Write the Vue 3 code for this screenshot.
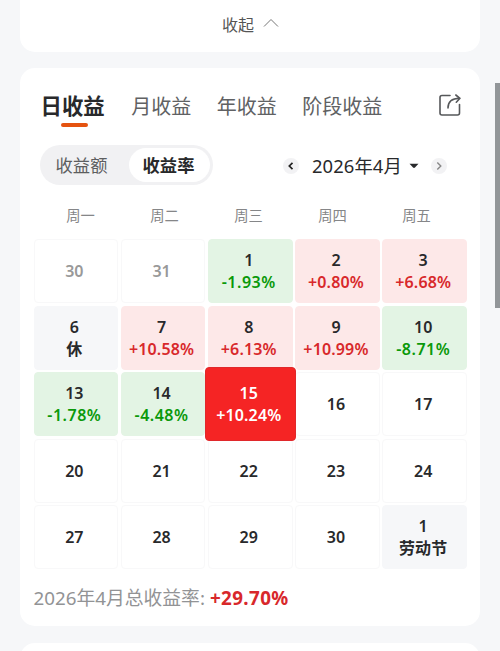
<template>
    <div class="page">
        <section class="card collapse">
            <span>收起</span>
            <svg class="arrow-up" viewBox="0 0 16 10">
                <path d="M1 8.5 8 1.5 15 8.5" />
            </svg>
        </section>

        <section class="card profit">
            <nav class="tabs">
                <div
                    v-for="(tab, index) in tabs"
                    :key="tab"
                    class="tab"
                    :class="{ active: index === activeTab }"
                    @click="activeTab = index"
                >
                    {{ tab }}
                </div>
                <svg class="share" viewBox="0 0 24 24">
                    <path d="M12 2.500H4Q2 2.500 2 4.500V20Q2 22 4 22H19.500Q21.500 22 21.500 20V11.500" />
                    <path d="M10 15C10 9.500 13 5.500 21.500 5.300M17.800 2 22 5.300 18.300 9.200" />
                </svg>
            </nav>

            <div class="toolbar">
                <div class="switch">
                    <div class="option" :class="{ on: mode === 'amount' }" @click="mode = 'amount'">收益额</div>
                    <div class="option" :class="{ on: mode === 'rate' }" @click="mode = 'rate'">收益率</div>
                </div>
                <div class="picker">
                    <div class="round">
                        <svg viewBox="0 0 16 16"><path d="M9.500 4.800 6.300 8 9.500 11.200" /></svg>
                    </div>
                    <div class="month">2026年4月</div>
                    <svg class="caret" viewBox="0 0 10 6"><path d="M.5 .8H9.500L6 4.600Q5 5.500 4 4.600Z" /></svg>
                    <div class="round next">
                        <svg viewBox="0 0 16 16"><path d="M6.300 4.500 9.800 8 6.300 11.500" /></svg>
                    </div>
                </div>
            </div>

            <div class="week">
                <div v-for="name in weekdays" :key="name">{{ name }}</div>
            </div>

            <div class="days">
                <div v-for="(item, index) in days" :key="index" class="day" :class="item.type">
                    <div class="num">{{ item.day }}</div>
                    <div v-if="item.text" class="text">{{ item.text }}</div>
                </div>
            </div>

            <footer class="total">
                <span>2026年4月总收益率:</span>
                <b>+29.70%</b>
            </footer>
        </section>

        <section class="card following"></section>
        <div class="scrollbar"></div>
    </div>
</template>

<script setup>
import { ref } from "vue";

const tabs = ["日收益", "月收益", "年收益", "阶段收益"];
const weekdays = ["周一", "周二", "周三", "周四", "周五"];
const activeTab = ref(0);
const mode = ref("rate");

const days = [
    { day: 30, type: "other" },
    { day: 31, type: "other" },
    { day: 1, text: "-1.93%", type: "down" },
    { day: 2, text: "+0.80%", type: "up" },
    { day: 3, text: "+6.68%", type: "up" },
    { day: 6, text: "休", type: "rest" },
    { day: 7, text: "+10.58%", type: "up" },
    { day: 8, text: "+6.13%", type: "up" },
    { day: 9, text: "+10.99%", type: "up" },
    { day: 10, text: "-8.71%", type: "down" },
    { day: 13, text: "-1.78%", type: "down" },
    { day: 14, text: "-4.48%", type: "down" },
    { day: 15, text: "+10.24%", type: "selected" },
    { day: 16 },
    { day: 17 },
    { day: 20 },
    { day: 21 },
    { day: 22 },
    { day: 23 },
    { day: 24 },
    { day: 27 },
    { day: 28 },
    { day: 29 },
    { day: 30 },
    { day: 1, text: "劳动节", type: "rest" },
];
</script>

<style>
body {
    background-color: #f6f7f9;
}
</style>

<style scoped>
.page {
    position: relative;
    height: 651px;
    overflow: hidden;
    padding: 0 20px;
    box-sizing: border-box;
    display: flex;
    flex-direction: column;
    gap: 16px;
    background-color: #f6f7f9;
    font-family: "Noto Sans", "Noto Sans CJK SC", sans-serif;
    color: #28292b;
}

.card {
    flex: none;
    box-sizing: border-box;
    background-color: #fff;
    border-radius: 15px;
}

.collapse {
    height: 52px;
    border-radius: 0 0 15px 15px;
    display: flex;
    justify-content: center;
    gap: 9px;
    padding: 13px 0 0 1px;
    font-size: 16px;
    line-height: 24px;
    color: #555;
}

.arrow-up {
    width: 16px;
    height: 10px;
    margin-top: 5px;
    fill: none;
    stroke: #777;
}

.profit {
    height: 558px;
    padding: 20px 13px 0 13.5px;
}

.tabs {
    display: flex;
    height: 40px;
    padding: 0 5px 0 7px;
    gap: 25.5px;
    font-size: 20px;
    line-height: 37px;
    color: #606163;
}

.tab {
    white-space: nowrap;
}

.tab.active {
    display: flex;
    flex-direction: column;
    align-items: center;
    margin-right: 1px;
    font-size: 21.4px;
    font-weight: bold;
    line-height: 36px;
    color: #28292b;
}

.tab.active::after {
    content: "";
    width: 27px;
    height: 4px;
    margin: -1px 0 0 4px;
    border-radius: 2px;
    background-color: #e55310;
}

.share {
    width: 24px;
    height: 24px;
    margin: 5px 0 0 auto;
    fill: none;
    stroke: #56585a;
    stroke-width: 1.6;
    stroke-linecap: round;
    stroke-linejoin: round;
}

.toolbar {
    display: flex;
    justify-content: space-between;
    align-items: center;
    height: 40px;
    margin-top: 17px;
    padding: 0 20px 0 6px;
}

.switch {
    display: flex;
    box-sizing: border-box;
    width: 173px;
    height: 40px;
    padding: 3px;
    border-radius: 20px;
    background-color: #f1f1f3;
}

.option {
    box-sizing: border-box;
    width: 86px;
    padding-right: 8px;
    text-align: center;
    font-size: 17.3px;
    line-height: 36px;
    color: #5d5e60;
}

.option.on {
    width: 81px;
    height: 34px;
    padding-right: 1px;
    border-radius: 17px;
    background-color: #fff;
    font-weight: bold;
    color: #28292b;
}

.picker {
    display: flex;
    align-items: center;
    padding-top: 1px;
}

.round {
    width: 16px;
    height: 16px;
    border-radius: 50%;
    background-color: #f2f2f4;
}

.round svg {
    display: block;
    fill: none;
    stroke: #222;
    stroke-width: 1.7;
}

.round.next svg {
    stroke: #888;
    stroke-width: 1.4;
}

.month {
    margin: 0 7px 0 13px;
    font-size: 18.4px;
    line-height: 26px;
    letter-spacing: 0.1px;
}

.caret {
    width: 10px;
    height: 6px;
    margin-right: 12px;
    fill: #28292b;
}

.week {
    display: grid;
    grid-template-columns: repeat(5, 84px);
    margin: 20px 0 0 5px;
    text-align: center;
    font-size: 14.3px;
    line-height: 22px;
    color: #858688;
}

.days {
    display: grid;
    grid-template-columns: repeat(5, 1fr);
    grid-auto-rows: 64px;
    gap: 2.6px;
    margin-top: 12px;
}

.day {
    display: flex;
    flex-direction: column;
    align-items: center;
    justify-content: center;
    box-sizing: border-box;
    padding-right: 3px;
    border: 1px solid #f8f8f9;
    border-radius: 4px;
    font-size: 16px;
    font-weight: 600;
    line-height: 22px;
}

.text {
    letter-spacing: 0.15px;
}

.other {
    color: #999;
}

.up {
    border-color: #fde8e8;
    background-color: #fde8e8;
}

.up .text {
    color: #d8282b;
}

.down {
    border-color: #e3f4e4;
    background-color: #e3f4e4;
}

.down .text {
    color: #0a990a;
    letter-spacing: 0.5px;
}

.rest {
    border-color: #f6f7f9;
    background-color: #f6f7f9;
}

.selected {
    z-index: 1;
    margin: -5px -3px;
    border-color: #e0282b;
    background-color: #f52424;
    color: #fff;
}

.total {
    display: flex;
    gap: 5px;
    margin-top: 16px;
    font-size: 18.8px;
    line-height: 26px;
    color: #929395;
}

.total b {
    color: #d8282b;
    letter-spacing: 0.4px;
}

/* top edge of the next card in the list */
.following {
    height: 40px;
    margin-top: 1px;
}

.scrollbar {
    position: absolute;
    top: 83px;
    right: 0;
    width: 5px;
    height: 225px;
    background-color: #929699;
}
</style>
